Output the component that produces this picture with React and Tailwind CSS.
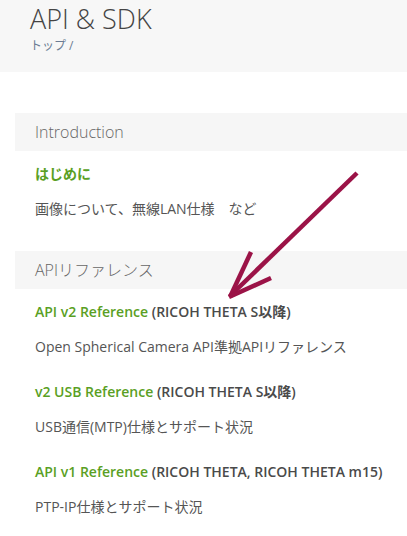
import React from "react";

const sections = [
  {
    title: "Introduction",
    items: [{ link: "はじめに", note: "", desc: "画像について、無線LAN仕様　など" }],
  },
  {
    title: "APIリファレンス",
    items: [
      { link: "API v2 Reference", note: " (RICOH THETA S以降)", desc: "Open Spherical Camera API準拠APIリファレンス" },
      { link: "v2 USB Reference", note: " (RICOH THETA S以降)", desc: "USB通信(MTP)仕様とサポート状況" },
      { link: "API v1 Reference", note: " (RICOH THETA, RICOH THETA m15)", desc: "PTP-IP仕様とサポート状況" },
    ],
  },
];

function Arrow() {
  return (
    <svg className="absolute left-0 top-0 pointer-events-none" width="407" height="536" viewBox="0 0 407 536">
      <g stroke="#9b1347" strokeWidth="4.5" strokeLinecap="butt" fill="none">
        <line x1="357" y1="173" x2="230" y2="296" />
        <line x1="251" y1="252" x2="230" y2="297" />
        <line x1="271" y1="278" x2="229" y2="297" />
      </g>
    </svg>
  );
}

export default function App() {
  return (
    <div
      className="relative w-[407px] h-[536px] overflow-hidden bg-white"
      style={{ fontFamily: '"Open Sans", "Noto Sans CJK JP", sans-serif' }}
    >
      <header className="h-[72px] bg-[#f7f7f7] pl-[30px] pt-[4px]">
        <h1 className="text-[27px] leading-[30px] font-light text-[#444]">API &amp; SDK</h1>
        <div className="mt-[3px] text-[12px] leading-[18px] text-[#6b7c93]">トップ /</div>
      </header>

      <main className="pl-[15px]">
        {sections.map((s, si) => (
          <section key={s.title} className={si === 0 ? "mt-[41px]" : "mt-[32px]"}>
            <h2 className="h-[38px] flex items-center pl-[20px] bg-[#f6f6f6] text-[16px] font-light text-[#666]">
              {s.title}
            </h2>
            <div className="pl-[20px]">
              {s.items.map((it, i) => (
                <div key={it.link} className={i === 0 ? "mt-[13px]" : "mt-[25px]"}>
                  <div className="text-[14px] leading-[20px] font-semibold">
                    <span className="text-[#5a9f24]">{it.link}</span>
                    <span className="text-[#4a4a4a]">{it.note}</span>
                  </div>
                  <p className="mt-[15px] text-[14px] leading-[20px] text-[#555]">{it.desc}</p>
                </div>
              ))}
            </div>
          </section>
        ))}
      </main>

      <Arrow />
    </div>
  );
}
